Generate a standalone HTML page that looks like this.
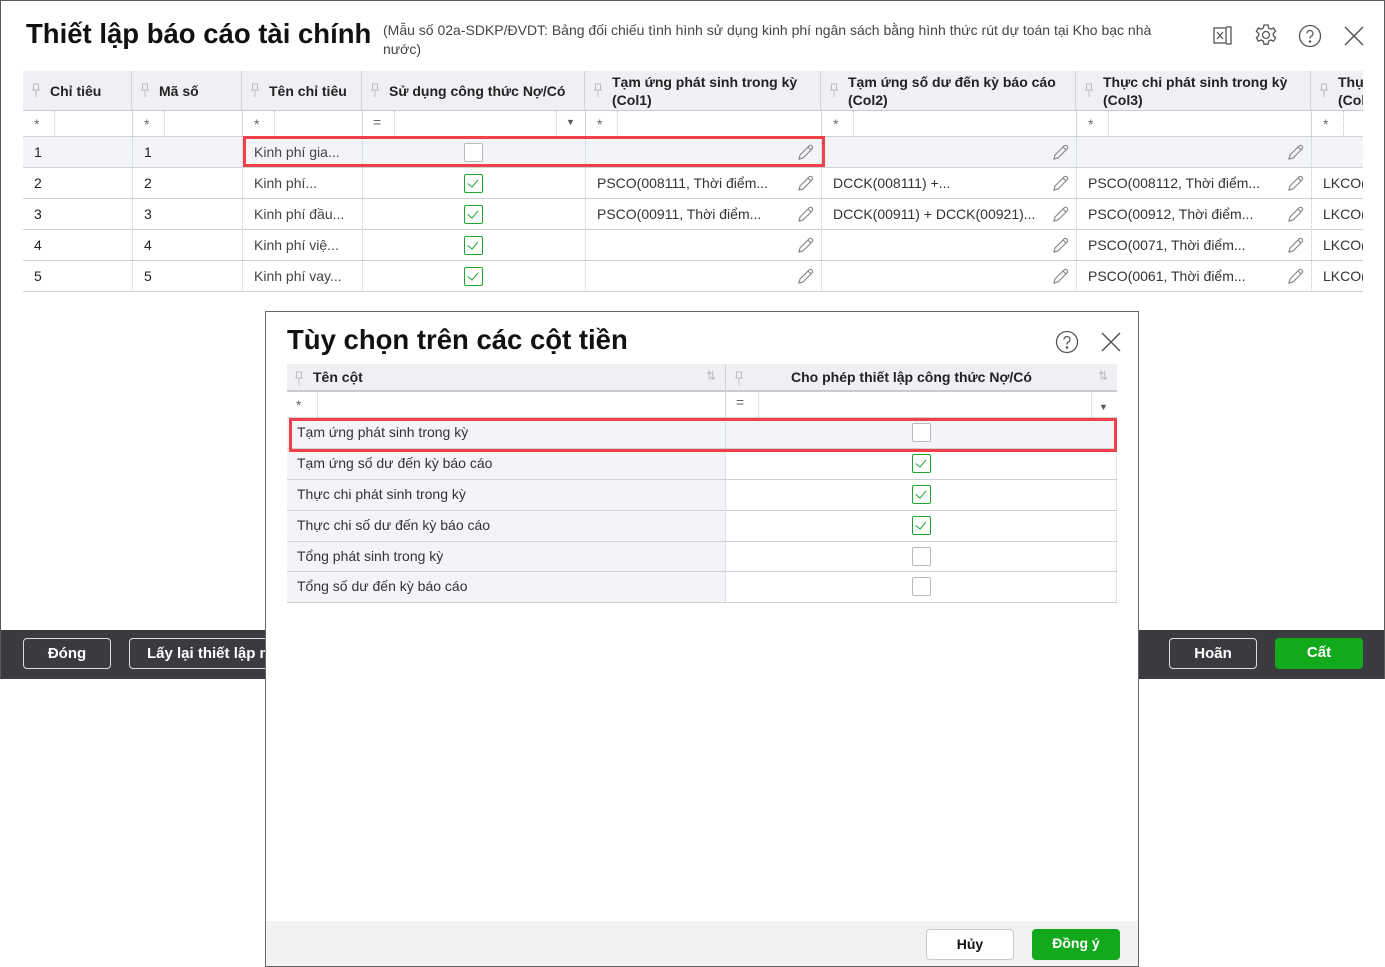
<!DOCTYPE html>
<html><head><meta charset="utf-8"><style>
*{box-sizing:border-box;margin:0;padding:0}
body{width:1385px;height:967px;position:relative;background:#fff;font-family:"Liberation Sans",sans-serif;color:#222;overflow:hidden}
.a{position:absolute}
.win{left:0;top:0;width:1385px;height:679px;border:1px solid #5a5a5a;border-bottom:none;background:#fff}
.tbl{left:23px;top:71px;width:1340px;height:222px;overflow:hidden}
.hd{background:#eef0f4;border-bottom:1px solid #c8cad0}
.c{position:absolute;font-size:14px;white-space:nowrap;overflow:hidden}
.hcell{position:absolute;top:0;height:40px;border-right:1px solid #d0d2d8;font-weight:bold;font-size:14px;color:#222}
.pin{position:absolute;top:12px;left:9px;width:8px;height:14px}
.row{position:absolute;left:0;width:1340px;height:31px;border-bottom:1px solid #cfd1d6}
.vl{position:absolute;top:0;bottom:0;border-left:1px dotted #c3c7d0}
.cb{position:absolute;width:19px;height:19px;border:1px solid #bbb;border-radius:2px;background:#fff}
.cb.on{border-color:#1fa62e}
.cb.on:after{content:"";position:absolute;left:5px;top:2px;width:5px;height:9px;border:solid #1fa62e;border-width:0 1.5px 1.5px 0;transform:rotate(40deg)}
.pen{position:absolute;width:18px;height:18px}
.btn{position:absolute;height:31px;border-radius:4px;font-weight:bold;font-size:15px;text-align:center;line-height:29px}
</style></head><body>
<div class="a win"></div>
<div class="a" style="left:26px;top:18px;font-size:27.5px;font-weight:bold;color:#111">Thiết lập báo cáo tài chính</div>
<div class="a" style="left:383px;top:21px;width:825px;font-size:14px;color:#444;line-height:19px;white-space:nowrap">(Mẫu số 02a-SDKP/ĐVDT: Bảng đối chiếu tình hình sử dụng kinh phí ngân sách bằng hình thức rút dự toán tại Kho bạc nhà<br>nước)</div>
<svg class="a" style="left:1212px;top:24px" width="22" height="22" viewBox="0 0 22 22" fill="none" stroke="#555" stroke-width="1.3"><rect x="2" y="4" width="12" height="15"/><path d="M14 3h5v17h-5M5 8l6 7M11 8l-6 7"/></svg>
<svg class="a" style="left:1254px;top:23px" width="24" height="24" viewBox="0 0 24 24" fill="none" stroke="#555" stroke-width="1.3"><circle cx="12" cy="12" r="3.5"/><path d="M10 2h4l.6 3 2.2 1.2 2.8-1.2 2 3.4-2.3 2v2.4l2.3 2-2 3.4-2.8-1.2-2.2 1.2-.6 3h-4l-.6-3-2.2-1.2-2.8 1.2-2-3.4 2.3-2v-2.4l-2.3-2 2-3.4 2.8 1.2L9.4 5z"/></svg>
<svg class="a" style="left:1298px;top:24px" width="24" height="24" viewBox="0 0 24 24" fill="none" stroke="#555" stroke-width="1.3"><circle cx="12" cy="12" r="10.5"/><path d="M9 9.5a3 3 0 1 1 4 2.8c-1 .4-1 1.2-1 2.2"/><circle cx="12" cy="17.5" r=".6" fill="#555"/></svg>
<svg class="a" style="left:1343px;top:25px" width="22" height="22" viewBox="0 0 22 22" stroke="#555" stroke-width="1.5"><path d="M2 2l18 18M20 2L2 20"/></svg>

<div class="a tbl">
 <div class="a hd" style="left:0;top:0;width:1340px;height:40px"></div>
 <div class="hcell" style="left:0;width:109px"><svg class="pin" viewBox="0 0 8 14" fill="none" stroke="#bbb"><path d="M1.5 1h5v6h-5zM0 7h8M4 7v7"/></svg><span class="c" style="left:27px;top:12px;font-weight:bold">Chỉ tiêu</span></div>
 <div class="hcell" style="left:109px;width:110px"><svg class="pin" viewBox="0 0 8 14" fill="none" stroke="#bbb"><path d="M1.5 1h5v6h-5zM0 7h8M4 7v7"/></svg><span class="c" style="left:27px;top:12px;font-weight:bold">Mã số</span></div>
 <div class="hcell" style="left:219px;width:120px"><svg class="pin" viewBox="0 0 8 14" fill="none" stroke="#bbb"><path d="M1.5 1h5v6h-5zM0 7h8M4 7v7"/></svg><span class="c" style="left:27px;top:12px;font-weight:bold">Tên chỉ tiêu</span></div>
 <div class="hcell" style="left:339px;width:223px"><svg class="pin" viewBox="0 0 8 14" fill="none" stroke="#bbb"><path d="M1.5 1h5v6h-5zM0 7h8M4 7v7"/></svg><span class="c" style="left:27px;top:12px;font-weight:bold">Sử dụng công thức Nợ/Có</span></div>
 <div class="hcell" style="left:562px;width:236px"><svg class="pin" viewBox="0 0 8 14" fill="none" stroke="#bbb"><path d="M1.5 1h5v6h-5zM0 7h8M4 7v7"/></svg><span class="c" style="left:27px;top:2px;line-height:18px;font-weight:bold">Tạm ứng phát sinh trong kỳ<br>(Col1)</span></div>
 <div class="hcell" style="left:798px;width:255px"><svg class="pin" viewBox="0 0 8 14" fill="none" stroke="#bbb"><path d="M1.5 1h5v6h-5zM0 7h8M4 7v7"/></svg><span class="c" style="left:27px;top:2px;line-height:18px;font-weight:bold">Tạm ứng số dư đến kỳ báo cáo<br>(Col2)</span></div>
 <div class="hcell" style="left:1053px;width:235px"><svg class="pin" viewBox="0 0 8 14" fill="none" stroke="#bbb"><path d="M1.5 1h5v6h-5zM0 7h8M4 7v7"/></svg><span class="c" style="left:27px;top:2px;line-height:18px;font-weight:bold">Thực chi phát sinh trong kỳ<br>(Col3)</span></div>
 <div class="hcell" style="left:1288px;width:60px;border:none"><svg class="pin" viewBox="0 0 8 14" fill="none" stroke="#bbb"><path d="M1.5 1h5v6h-5zM0 7h8M4 7v7"/></svg><span class="c" style="left:27px;top:2px;line-height:18px;font-weight:bold">Thự<br>(Col</span></div>
 <div class="row" style="top:40px;height:26px">
  <span class="c" style="left:11px;top:5px;color:#666">*</span><div class="vl" style="left:31px"></div>
  <div class="vl" style="left:109px;border-left:1px solid #d0d2d8"></div><span class="c" style="left:121px;top:5px;color:#666">*</span><div class="vl" style="left:141px"></div>
  <div class="vl" style="left:219px;border-left:1px solid #d0d2d8"></div><span class="c" style="left:231px;top:5px;color:#666">*</span><div class="vl" style="left:251px"></div>
  <div class="vl" style="left:339px;border-left:1px solid #d0d2d8"></div><span class="c" style="left:350px;top:3px;color:#666">=</span><div class="vl" style="left:371px"></div><div class="vl" style="left:533px"></div><span class="c" style="left:543px;top:6px;font-size:9px;color:#555">▼</span>
  <div class="vl" style="left:562px;border-left:1px solid #d0d2d8"></div><span class="c" style="left:574px;top:5px;color:#666">*</span><div class="vl" style="left:594px"></div>
  <div class="vl" style="left:798px;border-left:1px solid #d0d2d8"></div><span class="c" style="left:810px;top:5px;color:#666">*</span><div class="vl" style="left:830px"></div>
  <div class="vl" style="left:1053px;border-left:1px solid #d0d2d8"></div><span class="c" style="left:1065px;top:5px;color:#666">*</span><div class="vl" style="left:1085px"></div>
  <div class="vl" style="left:1288px;border-left:1px solid #d0d2d8"></div><span class="c" style="left:1300px;top:5px;color:#666">*</span><div class="vl" style="left:1320px"></div>
 </div>
</div>
<div class="a" style="left:23px;top:137px;width:1340px;height:155px;overflow:hidden">
 <div class="row" style="top:0;background:#f3f4f7"></div>
 <div class="row" style="top:31px"></div>
 <div class="row" style="top:62px"></div>
 <div class="row" style="top:93px"></div>
 <div class="row" style="top:124px"></div>
 <div class="vl" style="left:109px"></div><div class="vl" style="left:219px"></div><div class="vl" style="left:339px"></div><div class="vl" style="left:562px"></div><div class="vl" style="left:798px"></div><div class="vl" style="left:1053px"></div><div class="vl" style="left:1288px"></div>
 <span class="c" style="left:11px;top:7px">1</span><span class="c" style="left:121px;top:7px">1</span><span class="c" style="left:231px;top:7px;color:#444">Kinh phí gia...</span>
 <span class="c" style="left:11px;top:38px">2</span><span class="c" style="left:121px;top:38px">2</span><span class="c" style="left:231px;top:38px;color:#444">Kinh phí...</span>
 <span class="c" style="left:11px;top:69px">3</span><span class="c" style="left:121px;top:69px">3</span><span class="c" style="left:231px;top:69px;color:#444">Kinh phí đầu...</span>
 <span class="c" style="left:11px;top:100px">4</span><span class="c" style="left:121px;top:100px">4</span><span class="c" style="left:231px;top:100px;color:#444">Kinh phí việ...</span>
 <span class="c" style="left:11px;top:131px">5</span><span class="c" style="left:121px;top:131px">5</span><span class="c" style="left:231px;top:131px;color:#444">Kinh phí vay...</span>
 <div class="cb" style="left:441px;top:6px"></div><div class="cb on" style="left:441px;top:37px"></div><div class="cb on" style="left:441px;top:68px"></div><div class="cb on" style="left:441px;top:99px"></div><div class="cb on" style="left:441px;top:130px"></div>
 <span class="c" style="left:574px;top:38px;color:#333">PSCO(008111, Thời điểm...</span>
 <span class="c" style="left:574px;top:69px;color:#333">PSCO(00911, Thời điểm...</span>
 <span class="c" style="left:810px;top:38px;color:#333">DCCK(008111) +...</span>
 <span class="c" style="left:810px;top:69px;color:#333">DCCK(00911) + DCCK(00921)...</span>
 <span class="c" style="left:1065px;top:38px;color:#333">PSCO(008112, Thời điểm...</span>
 <span class="c" style="left:1065px;top:69px;color:#333">PSCO(00912, Thời điểm...</span>
 <span class="c" style="left:1065px;top:100px;color:#333">PSCO(0071, Thời điểm...</span>
 <span class="c" style="left:1065px;top:131px;color:#333">PSCO(0061, Thời điểm...</span>
 <span class="c" style="left:1300px;top:38px;color:#333">LKCO(</span><span class="c" style="left:1300px;top:69px;color:#333">LKCO(</span><span class="c" style="left:1300px;top:100px;color:#333">LKCO(</span><span class="c" style="left:1300px;top:131px;color:#333">LKCO(</span>
</div>
<svg width="0" height="0" style="position:absolute"><defs><g id="p" fill="none" stroke="#888" stroke-width="1.2"><path d="M3 15l1-4 9-9a2 2 0 0 1 3 3l-9 9z M12 3l3 3"/></g></defs></svg>
<svg class="pen" style="left:796px;top:144px"><use href="#p"/></svg><svg class="pen" style="left:1051px;top:144px"><use href="#p"/></svg><svg class="pen" style="left:1286px;top:144px"><use href="#p"/></svg>
<svg class="pen" style="left:796px;top:175px"><use href="#p"/></svg><svg class="pen" style="left:1051px;top:175px"><use href="#p"/></svg><svg class="pen" style="left:1286px;top:175px"><use href="#p"/></svg>
<svg class="pen" style="left:796px;top:206px"><use href="#p"/></svg><svg class="pen" style="left:1051px;top:206px"><use href="#p"/></svg><svg class="pen" style="left:1286px;top:206px"><use href="#p"/></svg>
<svg class="pen" style="left:796px;top:237px"><use href="#p"/></svg><svg class="pen" style="left:1051px;top:237px"><use href="#p"/></svg><svg class="pen" style="left:1286px;top:237px"><use href="#p"/></svg>
<svg class="pen" style="left:796px;top:268px"><use href="#p"/></svg><svg class="pen" style="left:1051px;top:268px"><use href="#p"/></svg><svg class="pen" style="left:1286px;top:268px"><use href="#p"/></svg>
<div class="a" style="left:243px;top:136px;width:582px;height:31px;border:3px solid #f0404a"></div>

<div class="a" style="left:0;top:630px;width:1385px;height:49px;background:#3a3b3f;border-left:1px solid #5a5a5a;border-right:1px solid #5a5a5a"></div>
<div class="btn" style="left:23px;top:638px;width:88px;border:1px solid #ddd;color:#fff">Đóng</div>
<div class="btn" style="left:129px;top:638px;width:150px;border:1px solid #ddd;color:#fff;text-align:left;padding-left:17px;white-space:nowrap;overflow:hidden">Lấy lại thiết lập mặc định</div>
<div class="btn" style="left:1169px;top:638px;width:88px;border:1px solid #ddd;color:#fff">Hoãn</div>
<div class="btn" style="left:1275px;top:638px;width:88px;background:#12aa1c;color:#fff">Cất</div>

<div class="a" style="left:265px;top:311px;width:874px;height:656px;background:#fff;border:1px solid #666"></div>
<div class="a" style="left:266px;top:921px;width:872px;height:45px;background:#f2f2f2"></div>
<div class="a" style="left:287px;top:324px;font-size:27.5px;font-weight:bold;color:#111">Tùy chọn trên các cột tiền</div>
<svg class="a" style="left:1055px;top:330px" width="24" height="24" viewBox="0 0 24 24" fill="none" stroke="#555" stroke-width="1.3"><circle cx="12" cy="12" r="10.5"/><path d="M9 9.5a3 3 0 1 1 4 2.8c-1 .4-1 1.2-1 2.2"/><circle cx="12" cy="17.5" r=".6" fill="#555"/></svg>
<svg class="a" style="left:1100px;top:331px" width="22" height="22" viewBox="0 0 22 22" stroke="#555" stroke-width="1.5"><path d="M2 2l18 18M20 2L2 20"/></svg>
<div class="a" style="left:287px;top:364px;width:830px;height:239px">
 <div class="a hd" style="left:0;top:0;width:830px;height:27px"></div>
 <svg class="a" style="left:8px;top:7px" width="8" height="14" viewBox="0 0 8 14" fill="none" stroke="#bbb"><path d="M1.5 1h5v6h-5zM0 7h8M4 7v7"/></svg>
 <span class="c" style="left:26px;top:5px;font-weight:bold">Tên cột</span>
 <span class="c" style="left:419px;top:5px;font-size:12px;color:#bbb">⇅</span>
 <div class="a" style="left:438px;top:0;height:27px;border-left:1px solid #d0d2d8"></div>
 <svg class="a" style="left:448px;top:7px" width="8" height="14" viewBox="0 0 8 14" fill="none" stroke="#bbb"><path d="M1.5 1h5v6h-5zM0 7h8M4 7v7"/></svg>
 <span class="c" style="left:504px;top:5px;font-weight:bold">Cho phép thiết lập công thức Nợ/Có</span>
 <span class="c" style="left:811px;top:5px;font-size:12px;color:#bbb">⇅</span>
 <div class="row" style="top:27px;width:830px;height:27px;border-top:1px solid #c8cad0"></div>
 <span class="c" style="left:9px;top:33px;color:#666">*</span><div class="vl" style="left:30px;top:28px;bottom:auto;height:25px"></div>
 <div class="a" style="left:438px;top:27px;height:27px;border-left:1px solid #d0d2d8"></div>
 <span class="c" style="left:449px;top:30px;color:#666">=</span><div class="vl" style="left:471px;top:28px;bottom:auto;height:25px"></div><div class="vl" style="left:804px;top:28px;bottom:auto;height:25px"></div><span class="c" style="left:812px;top:38px;font-size:9px;color:#555">▼</span>
 <div class="row" style="top:54px;width:830px;background:#f3f4f7"></div><div class="a" style="left:438px;top:54px;width:392px;height:31px;background:#f3f4f7;border-bottom:1px solid #cfd1d6"></div>
 <div class="a" style="left:0;top:85px;width:438px;height:154px;background:#f3f4f7"></div>
 <div class="a" style="left:0;top:115px;width:830px;border-top:1px solid #cfd1d6"></div>
 <div class="a" style="left:0;top:146px;width:830px;border-top:1px solid #cfd1d6"></div>
 <div class="a" style="left:0;top:177px;width:830px;border-top:1px solid #cfd1d6"></div>
 <div class="a" style="left:0;top:207px;width:830px;border-top:1px solid #cfd1d6"></div>
 <div class="a" style="left:0;top:238px;width:830px;border-top:1px solid #cfd1d6"></div>
 <div class="vl" style="left:438px;top:54px"></div><div class="vl" style="left:829px;top:54px"></div>
 <span class="c" style="left:10px;top:60px;color:#333">Tạm ứng phát sinh trong kỳ</span>
 <span class="c" style="left:10px;top:91px;color:#333">Tạm ứng số dư đến kỳ báo cáo</span>
 <span class="c" style="left:10px;top:122px;color:#333">Thực chi phát sinh trong kỳ</span>
 <span class="c" style="left:10px;top:153px;color:#333">Thực chi số dư đến kỳ báo cáo</span>
 <span class="c" style="left:10px;top:184px;color:#333">Tổng phát sinh trong kỳ</span>
 <span class="c" style="left:10px;top:214px;color:#333">Tổng số dư đến kỳ báo cáo</span>
 <div class="cb" style="left:625px;top:59px"></div>
 <div class="cb on" style="left:625px;top:90px"></div>
 <div class="cb on" style="left:625px;top:121px"></div>
 <div class="cb on" style="left:625px;top:152px"></div>
 <div class="cb" style="left:625px;top:183px"></div>
 <div class="cb" style="left:625px;top:213px"></div>
</div>
<div class="a" style="left:289px;top:418px;width:828px;height:34px;border:3px solid #f0404a"></div>
<div class="btn" style="left:926px;top:929px;width:88px;background:#fff;border:1px solid #c8c8d0;color:#111;font-size:14px">Hủy</div>
<div class="btn" style="left:1032px;top:929px;width:88px;background:#12aa1c;color:#fff;font-size:14px">Đồng ý</div>
</body></html>
